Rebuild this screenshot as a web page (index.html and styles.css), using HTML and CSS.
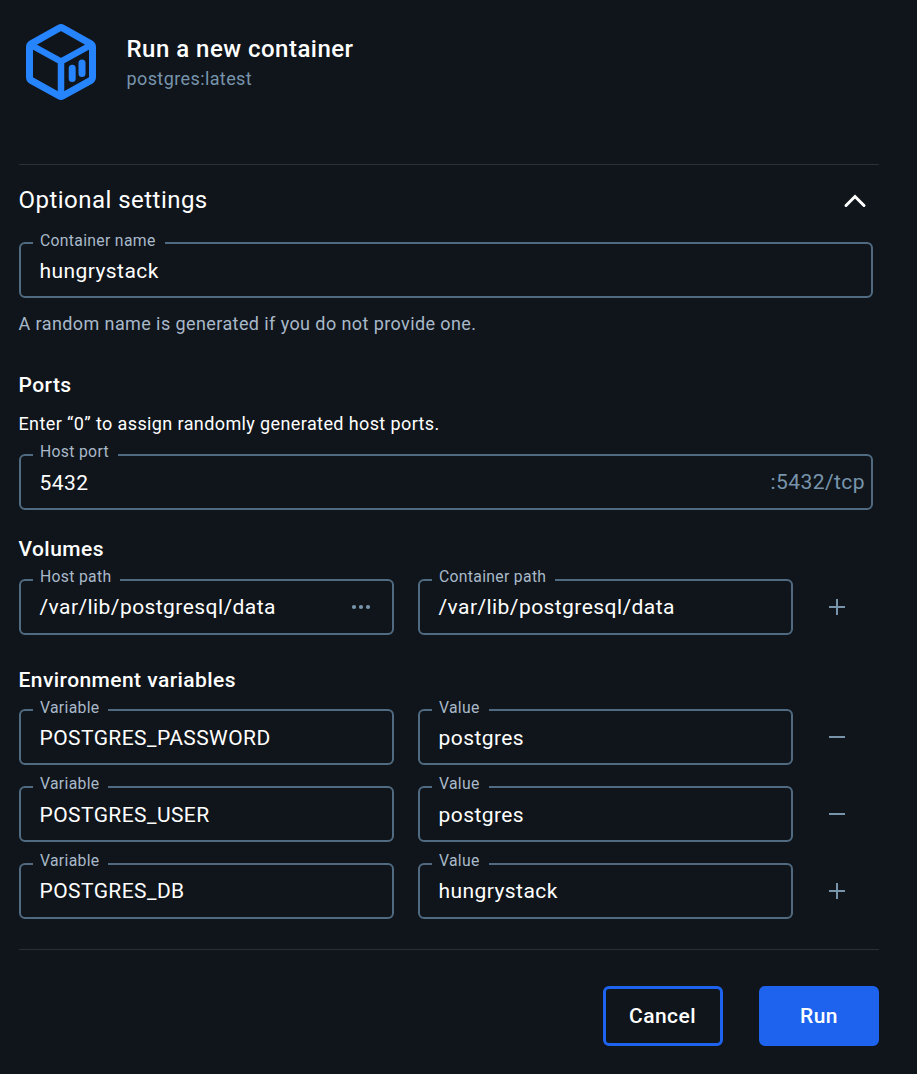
FILE: index.html
```html
<!DOCTYPE html>
<html lang="en">
<head>
<meta charset="utf-8">
<title>Run a new container</title>
<link rel="stylesheet" href="styles.css">
</head>
<body>
<main class="dialog">
  <header class="header">
    <svg class="logo" width="70" height="76" viewBox="0 0 70 76" fill="none" stroke="currentColor" stroke-linecap="round" stroke-linejoin="round">
      <path stroke-width="7" d="M33.4 4Q35 3.1 36.6 4L64.4 19.6Q66.5 20.8 66.5 23.2V53Q66.5 55.4 64.4 56.6L36.6 72Q35 72.9 33.4 72L5.6 56.6Q3.5 55.4 3.5 53V23.2Q3.5 20.8 5.6 19.6Z"/>
      <path stroke-width="6.5" d="M5 21L35 37.5L65 21M35 37.5V72"/>
      <path stroke-width="7" d="M46.2 44.2V54.4M56 39V49.4"/>
    </svg>
    <div class="heading">
      <h1 class="title">Run a new container</h1>
      <div class="subtitle">postgres:latest</div>
    </div>
  </header>

  <section class="settings">
    <div class="settings-bar">
      <h2 class="settings-title">Optional settings</h2>
      <svg class="chevron" width="24" height="16" viewBox="0 0 24 16" fill="none" stroke="currentColor" stroke-width="3" stroke-linecap="round"><path d="M3 12.5L12 3.5L21 12.5"/></svg>
    </div>
    <div class="field low"><span class="label">Container name</span><span class="value">hungrystack</span></div>
    <p class="helper">A random name is generated if you do not provide one.</p>

    <h3 class="group-title ports-title">Ports</h3>
    <p class="note">Enter “0” to assign randomly generated host ports.</p>
    <div class="field low raised"><span class="label">Host port</span><span class="value">5432</span><span class="suffix">:5432/tcp</span></div>

    <h3 class="group-title volumes-title">Volumes</h3>
    <div class="row">
      <div class="field raised"><span class="label">Host path</span><span class="value">/var/lib/postgresql/data</span>
        <svg class="dots" width="20" height="6" viewBox="0 0 20 6" fill="currentColor"><circle cx="3" cy="3" r="2.1"/><circle cx="10" cy="3" r="2.1"/><circle cx="17" cy="3" r="2.1"/></svg>
      </div>
      <div class="field raised"><span class="label">Container path</span><span class="value">/var/lib/postgresql/data</span></div>
      <svg class="action" width="16" height="16" viewBox="0 0 16 16" stroke="currentColor" stroke-width="2"><path d="M0 8H16M8 0V16"/></svg>
    </div>

    <h3 class="group-title env-title">Environment variables</h3>
    <div class="rows">
      <div class="row">
        <div class="field low"><span class="label">Variable</span><span class="value">POSTGRES_PASSWORD</span></div>
        <div class="field low"><span class="label">Value</span><span class="value">postgres</span></div>
        <svg class="action" width="16" height="16" viewBox="0 0 16 16" stroke="currentColor" stroke-width="2"><path d="M0 8H16"/></svg>
      </div>
      <div class="row">
        <div class="field low raised"><span class="label">Variable</span><span class="value">POSTGRES_USER</span></div>
        <div class="field low raised"><span class="label">Value</span><span class="value">postgres</span></div>
        <svg class="action" width="16" height="16" viewBox="0 0 16 16" stroke="currentColor" stroke-width="2"><path d="M0 8H16"/></svg>
      </div>
      <div class="row">
        <div class="field raised"><span class="label">Variable</span><span class="value">POSTGRES_DB</span></div>
        <div class="field raised"><span class="label">Value</span><span class="value">hungrystack</span></div>
        <svg class="action" width="16" height="16" viewBox="0 0 16 16" stroke="currentColor" stroke-width="2"><path d="M0 8H16M8 0V16"/></svg>
      </div>
    </div>
  </section>

  <footer class="footer">
    <button class="button outlined">Cancel</button>
    <button class="button filled">Run</button>
  </footer>
</main>
</body>
</html>
```
FILE: styles.css
```css
* { box-sizing: border-box; }

body {
  margin: 0;
  background: #10151b;
  color: #fff;
  font-family: Roboto, "Noto Sans", sans-serif;
  font-size: 21px;
  letter-spacing: 0.43px;
}

h1, h2, h3, p { margin: 0; }
svg { display: block; flex: none; }

.dialog {
  height: 1074px;
  padding: 0 38px 0 19px;
}

.header {
  display: flex;
  align-items: flex-start;
  gap: 30.5px;
  height: 164px;
  padding: 24px 0 0 7px;
}

.logo { color: #2684ff; }
.heading { padding-top: 9px; }

.title {
  font-size: 24px;
  font-weight: 500;
  line-height: 32px;
  letter-spacing: 0.48px;
}

.subtitle {
  font-size: 18px;
  line-height: 28px;
  letter-spacing: 0.4px;
  color: #7794ab;
}

.settings {
  height: 786px;
  padding-right: 6px;
  border-top: 1px solid #2b3038;
  border-bottom: 1px solid #2b3038;
}

.settings-bar {
  display: flex;
  align-items: center;
  justify-content: space-between;
  height: 77px;
  padding: 0 6px 7px 0;
}

.settings-title {
  margin-left: -0.5px;
  font-size: 24px;
  font-weight: 400;
  line-height: 32px;
  letter-spacing: 0.47px;
}

.chevron { margin-top: 2px; }

.field {
  position: relative;
  display: flex;
  align-items: center;
  justify-content: space-between;
  height: 56px;
  padding: 0 6px 0 18.5px;
  border: 2px solid #506b81;
  border-radius: 6px;
}

.low .value { padding-top: 2px; }

.label {
  position: absolute;
  top: -14px;
  left: 12px;
  padding: 0 9px 0 7px;
  background: #10151b;
  color: #a9b9c9;
  font-size: 15.75px;
  line-height: 22px;
  letter-spacing: 0.31px;
  white-space: nowrap;
}

.raised .label { top: -15px; }

.suffix { color: #7794ab; }

.helper {
  padding-top: 12px;
  margin-left: -0.5px;
  font-size: 18px;
  line-height: 28px;
  letter-spacing: 0.41px;
  color: #a9b9c9;
}

.group-title {
  margin-left: -0.5px;
  font-size: 21px;
  font-weight: 500;
  line-height: 30px;
}

.ports-title { margin-top: 32px; }

.note {
  padding: 10px 0 16px;
  margin-left: -0.5px;
  font-size: 18px;
  line-height: 28px;
  letter-spacing: 0.39px;
}

.volumes-title {
  margin-top: 24px;
  margin-bottom: 15px;
}

.env-title {
  margin-top: 30px;
  margin-bottom: 14px;
}

.row {
  display: grid;
  grid-template-columns: 375px 375px 16px;
  column-gap: 24px;
  align-items: center;
}

.row .action {
  margin-left: 12px;
  color: #7794ab;
}

.rows {
  display: grid;
  row-gap: 21px;
}

.dots {
  margin-right: 15px;
  color: #7794ab;
}

.footer {
  display: flex;
  justify-content: flex-end;
  gap: 36px;
  padding-top: 36px;
}

.button {
  width: 120px;
  height: 60px;
  padding: 0;
  border: 3px solid #1d63ed;
  border-radius: 6px;
  color: #fff;
  font: 500 21px Roboto, "Noto Sans", sans-serif;
  letter-spacing: 0.43px;
}

.outlined {
  padding-right: 1px;
  background: transparent;
}

.filled { background: #1d63ed; }
```
